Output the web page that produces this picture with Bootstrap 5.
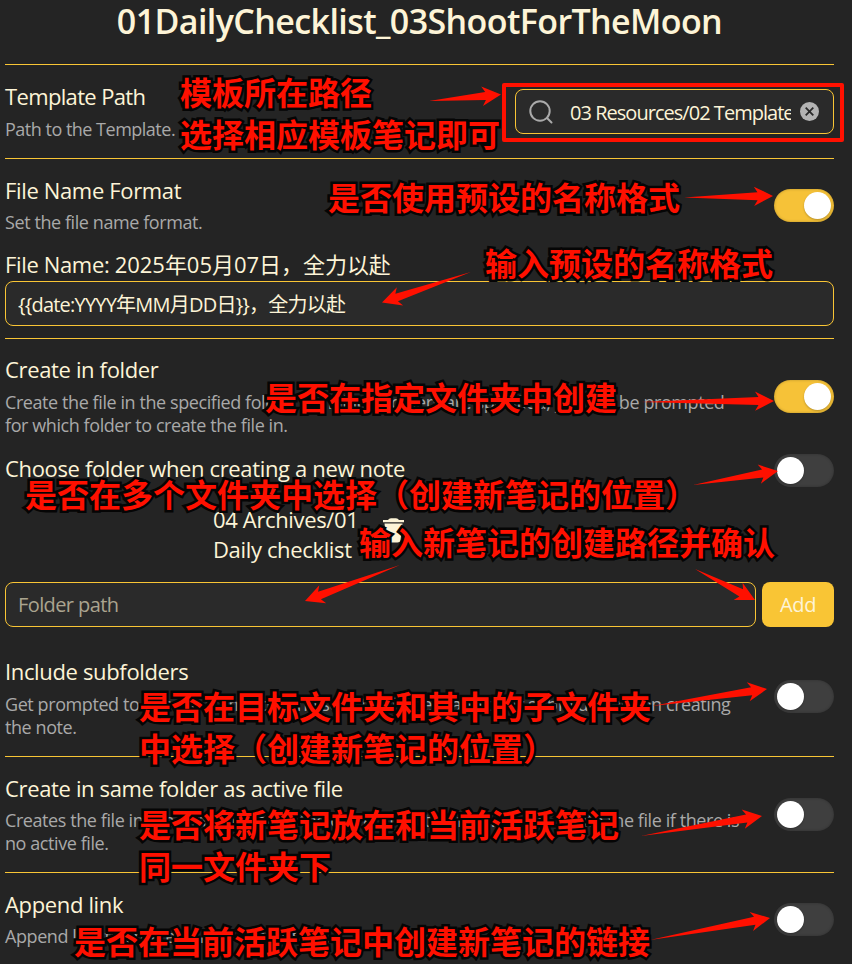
<!DOCTYPE html>
<html lang="zh-CN" data-bs-theme="dark">
<head>
<meta charset="utf-8">
<meta name="viewport" content="width=device-width, initial-scale=1">
<title>01DailyChecklist_03ShootForTheMoon</title>
<link href="https://cdn.jsdelivr.net/npm/bootstrap@5.3.0/dist/css/bootstrap.min.css" rel="stylesheet">
<style>
:root{--gold:#f9c535;--cream:#fdf4d7}
html,body{overflow:hidden}
body{background:#242424;color:var(--cream);font-family:"Open Sans","Noto Sans CJK SC",sans-serif;font-size:22px;line-height:30px;height:964px}
.settings{padding:0 18px 0 5px}
.page-title{height:64px;font-size:34px;font-weight:600;line-height:42px;letter-spacing:-.6px;color:var(--cream)}
.section{border-top:1px solid var(--gold)}
.s-path{height:94px}.s-name{height:180px}.s-folder{height:418px}.s-same{height:116px}.s-link{height:94px}
.pt-label{padding-top:16px}
.name,.key{letter-spacing:-.35px;white-space:nowrap}
.s-path .name{letter-spacing:-.65px}
.lead-line{height:30px;line-height:27px;letter-spacing:-.03px;white-space:nowrap}
.hint{color:#a9a9a9;font-size:18px;line-height:23px;margin-top:6px;letter-spacing:-.42px;white-space:nowrap}
.s-path .hint{margin-top:7px;letter-spacing:-.5px}
.field{height:45px;border:1px solid var(--gold);border-radius:8px;background:#2a2a2a;color:var(--cream);font-size:20px;letter-spacing:-.78px;padding:0 12px}
.field:focus{box-shadow:none}
.field::placeholder{color:#aaa48f;opacity:1;letter-spacing:-.6px}
.finder{width:319px;margin-top:24px;padding:0 14px 0 13px;letter-spacing:-.97px}
.finder-text{width:221px;margin-left:17px;line-height:43px;padding-top:2px}
.switch{width:60px;height:33px;border-radius:17px;background:#3f3f3f;padding:3px;box-shadow:inset 0 0 3px rgba(0,0,0,.25)}
.switch::before{content:"";display:block;width:27px;height:27px;border-radius:50%;background:#fff;box-shadow:0 1px 2px rgba(0,0,0,.25)}
.switch.on{background:#f6c238;justify-content:flex-end}
.row-first{height:92px}.row-first .switch{margin-top:1px}
.row-create{height:115px}.row-choose{height:33px}.row-choose .name{line-height:28px}
.row-create .name{line-height:28px}.row-create .hint{margin-top:8px}
.folders{height:78px;margin-top:17px;padding-left:208px}
.trash{margin:14px 0 0 23px}
.folder-entry{gap:6px}
.add-btn{width:72px;height:45px;border-radius:8px;background:var(--gold);color:#fdf4d7;font-size:20px;line-height:43px;padding:0;border:0;letter-spacing:-.3px}
.row-sub{padding-top:29px}.row-sub .hint{margin-top:7px}
.notes{inset:0;z-index:5;pointer-events:none}
.note{font-family:"Noto Sans CJK SC",sans-serif;font-weight:700;font-size:32px;line-height:42px;color:#ff1000;-webkit-text-stroke:5px #050505;paint-order:stroke fill;white-space:nowrap}
.frame{left:502px;top:83px;width:342px;height:59px;border:4px solid #ff1000;border-radius:2px}
.n1{left:180px;top:70px}.n2{left:328px;top:175px}.n3{left:485px;top:241px}.n4{left:265px;top:375px}
.n5{left:25px;top:472px}.n6{left:359px;top:520px}.n7{left:139px;top:684px}.n8{left:139px;top:802px}.n9{left:74px;top:919px}
</style>
<script src="https://cdn.jsdelivr.net/npm/bootstrap@5.3.0/dist/js/bootstrap.bundle.min.js"></script>
</head>
<body>
<main class="settings">
  <h1 class="page-title text-center mb-0">01DailyChecklist_03ShootForTheMoon</h1>

  <section class="section s-path d-flex justify-content-between">
    <div class="pt-label"><div class="name">Template Path</div><div class="hint">Path to the Template.</div></div>
    <div class="field finder d-flex align-items-center">
      <svg width="24" height="24" viewBox="0 0 24 24" fill="none" stroke="#aaa" stroke-width="2" stroke-linecap="round"><circle cx="11" cy="11" r="9.7"/><path d="M18 18l4.5 4.5"/></svg>
      <div class="finder-text overflow-hidden text-nowrap">03 Resources/02 Templates</div>
      <svg class="ms-auto" width="19" height="19" viewBox="0 0 19 19"><circle cx="9.5" cy="9.5" r="9.5" fill="#b3b3b3"/><path d="M5.7 5.7l7.6 7.6M13.3 5.7l-7.6 7.6" stroke="#2a2a2a" stroke-width="1.8"/></svg>
    </div>
  </section>

  <section class="section s-name">
    <div class="row-first d-flex justify-content-between align-items-center">
      <div class="align-self-start pt-label"><div class="name">File Name Format</div><div class="hint">Set the file name format.</div></div>
      <div class="switch on d-flex" role="switch" aria-checked="true"></div>
    </div>
    <div class="lead-line"><span class="key">File Name: </span>2025年05月07日，全力以赴</div>
    <input class="form-control field" value="{{date:YYYY年MM月DD日}}，全力以赴" aria-label="File name format">
  </section>

  <section class="section s-folder">
    <div class="row-create d-flex justify-content-between align-items-center">
      <div class="align-self-start pt-label"><div class="name">Create in folder</div><div class="hint">Create the file in the specified folder. If multiple folders are specified, you will be prompted<br>for which folder to create the file in.</div></div>
      <div class="switch on d-flex" role="switch" aria-checked="true"></div>
    </div>
    <div class="row-choose d-flex justify-content-between">
      <div class="name">Choose folder when creating a new note</div>
      <div class="switch d-flex" role="switch" aria-checked="false"></div>
    </div>
    <div class="folders d-flex">
      <div class="name">04 Archives/01<br>Daily checklist</div>
      <svg class="trash" width="23" height="27" viewBox="0 0 23 27" fill="#fdf4d7"><path d="M1 2h5q1-1.700 3-1.700h5q2 0 3 1.700h5v2.300H1zM2.500 5.500h18L18.500 22q-.3 2.500-3 2.500h-8q-2.700 0-3-2.500z"/></svg>
    </div>
    <div class="d-flex folder-entry">
      <input class="form-control field" placeholder="Folder path" aria-label="Folder path">
      <button class="btn add-btn flex-shrink-0" type="button">Add</button>
    </div>
    <div class="row-sub d-flex justify-content-between">
      <div><div class="name">Include subfolders</div><div class="hint">Get prompted to choose from both the selected folders and their subfolders when creating<br>the note.</div></div>
      <div class="switch d-flex mt-4" role="switch" aria-checked="false"></div>
    </div>
  </section>

  <section class="section s-same d-flex justify-content-between align-items-center">
    <div class="align-self-start pt-label"><div class="name">Create in same folder as active file</div><div class="hint">Creates the file in the same folder as the currently active file. Will not create the file if there is<br>no active file.</div></div>
    <div class="switch d-flex" role="switch" aria-checked="false"></div>
  </section>

  <section class="section s-link d-flex justify-content-between align-items-center">
    <div class="align-self-start pt-label"><div class="name">Append link</div><div class="hint">Append link to created file to current file.</div></div>
    <div class="switch d-flex" role="switch" aria-checked="false"></div>
  </section>
</main>

<div class="notes position-absolute">
  <div class="frame position-absolute"></div>
  <svg class="position-absolute top-0 start-0" width="852" height="964" fill="#ff1000">
    <path transform="translate(501 94.500) rotate(-5.200)" d="M0 0L-19-9.700-15.500-4-72.300 0-15.500 4-19 9.700z"/>
    <path transform="translate(773 196) rotate(-1)" d="M0 0L-19-9.700-15.500-4-89 0-15.500 4-19 9.700z"/>
    <path transform="translate(382 302.500) rotate(161.100)" d="M0 0L-19-9.700-15.500-4-94 0-15.500 4-19 9.700z"/>
    <path transform="translate(774 401) rotate(-.4)" d="M0 0L-19-9.700-15.500-4-133 0-15.500 4-19 9.700z"/>
    <path transform="translate(778 471) rotate(-9.400)" d="M0 0L-19-9.700-15.500-4-86 0-15.500 4-19 9.700z"/>
    <path transform="translate(305 601) rotate(159.200)" d="M0 0L-19-9.700-15.500-4-101.600 0-15.500 4-19 9.700z"/>
    <path transform="translate(755 600) rotate(27.300)" d="M0 0L-19-9.700-15.500-4-67.500 0-15.500 4-19 9.700z"/>
    <path transform="translate(767 689) rotate(-8.400)" d="M0 0L-19-9.700-15.500-4-116.300 0-15.500 4-19 9.700z"/>
    <path transform="translate(762 816) rotate(-9.400)" d="M0 0L-19-9.700-15.500-4-122.600 0-15.500 4-19 9.700z"/>
    <path transform="translate(770 918) rotate(-10.400)" d="M0 0L-19-9.700-15.500-4-122 0-15.500 4-19 9.700z"/>
  </svg>
  <div class="note n1 position-absolute">模板所在路径<br>选择相应模板笔记即可</div>
  <div class="note n2 position-absolute">是否使用预设的名称格式</div>
  <div class="note n3 position-absolute">输入预设的名称格式</div>
  <div class="note n4 position-absolute">是否在指定文件夹中创建</div>
  <div class="note n5 position-absolute">是否在多个文件夹中选择（创建新笔记的位置）</div>
  <div class="note n6 position-absolute">输入新笔记的创建路径并确认</div>
  <div class="note n7 position-absolute">是否在目标文件夹和其中的子文件夹<br>中选择（创建新笔记的位置）</div>
  <div class="note n8 position-absolute">是否将新笔记放在和当前活跃笔记<br>同一文件夹下</div>
  <div class="note n9 position-absolute">是否在当前活跃笔记中创建新笔记的链接</div>
</div>
</body>
</html>
